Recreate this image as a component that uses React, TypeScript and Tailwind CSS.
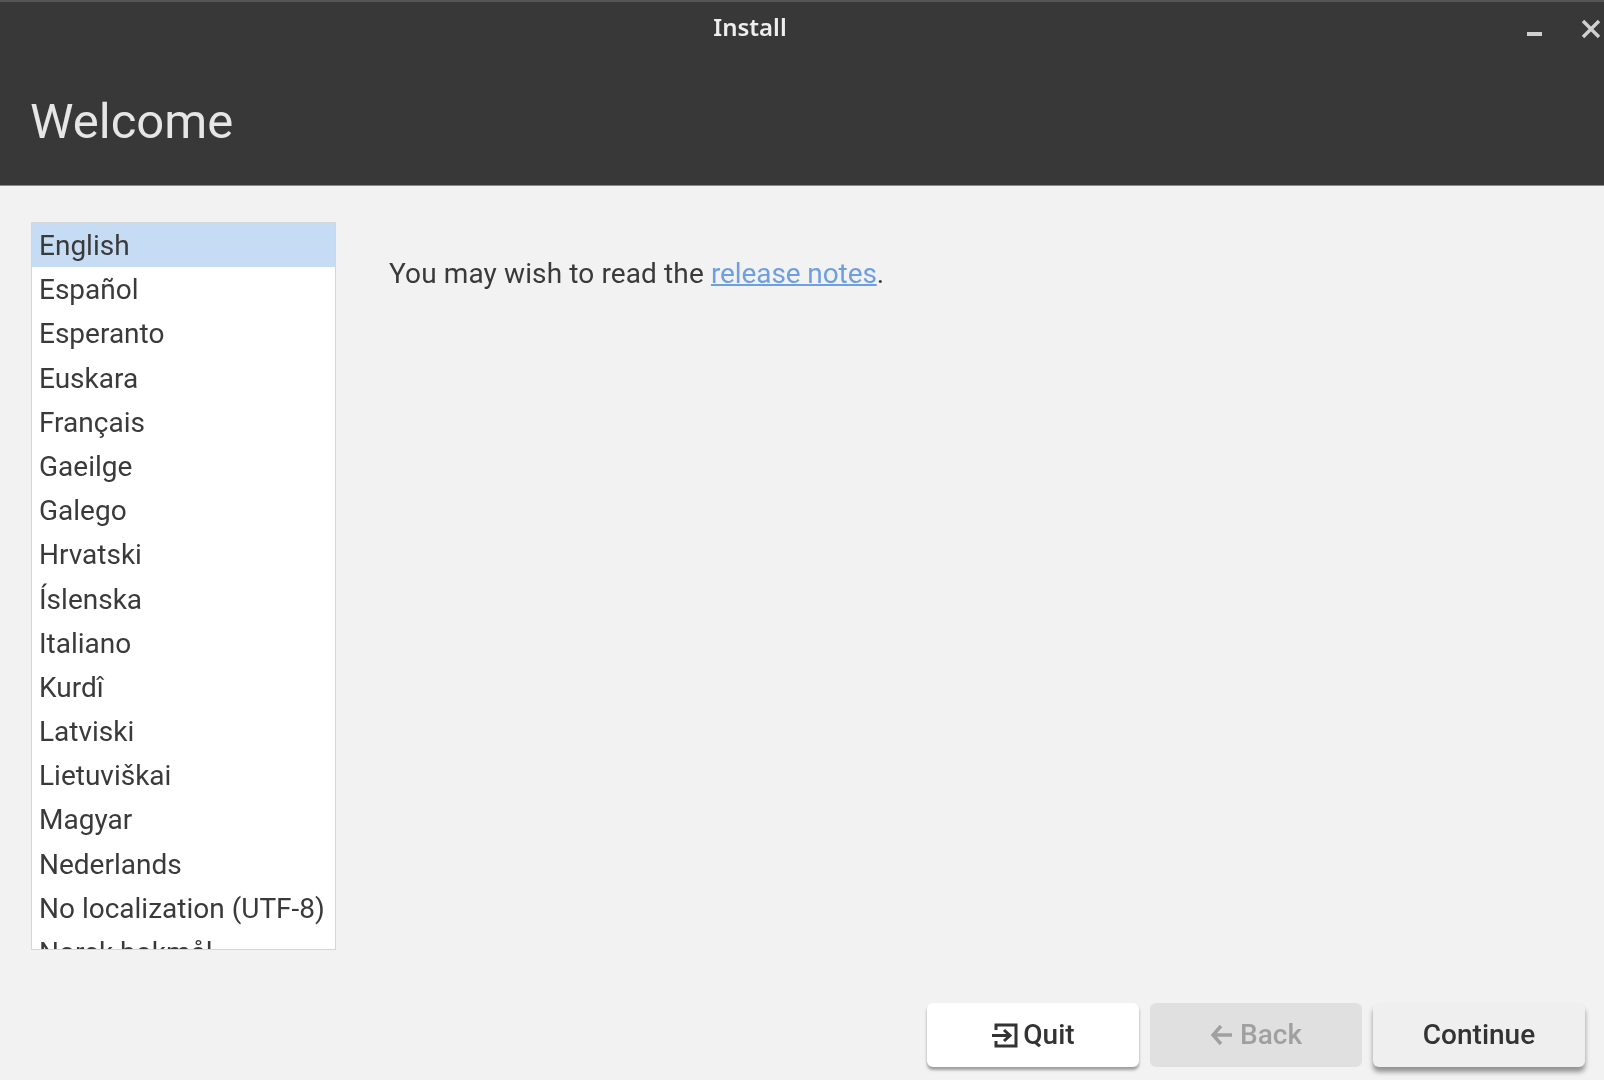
// App.tsx
const languages = [
  'English', 'Español', 'Esperanto', 'Euskara', 'Français', 'Gaeilge', 'Galego', 'Hrvatski', 'Íslenska',
  'Italiano', 'Kurdî', 'Latviski', 'Lietuviškai', 'Magyar', 'Nederlands', 'No localization (UTF-8)', 'Norsk bokmål',
]

export default function App() {
  return (
    <div className="flex h-[1080px] w-[1604px] flex-col overflow-hidden bg-[#f2f2f2] font-['Roboto',sans-serif] text-[#3a3a3a] blur-[0.6px]">

      {/* Header */}
      <header className="relative h-[186px] shrink-0 border-b border-[#8a8a8a] border-t-2 border-t-[#555555] bg-[#383838]">
        <div className="flex h-[50px] items-center justify-center">
          <span className="ml-[-104px] font-['Noto_Sans',sans-serif] text-[24px] font-semibold text-[#eeeeee]">Install</span>
        </div>
        <svg className="absolute right-[60px] top-[29px]" width="18" height="7" viewBox="0 0 18 7">
          <rect x="1" y="1" width="15" height="4" fill="#d0d0d0" />
        </svg>
        <svg className="absolute right-[3px] top-[17px]" width="20" height="20" viewBox="0 0 20 20">
          <path d="M2 2 L18 18 M18 2 L2 18" stroke="#d0d0d0" strokeWidth="3.4" fill="none" />
        </svg>
        <h1 className="ml-[30px] mt-[40px] text-[49px] font-normal leading-[60px] text-[#e6e6e6]">Welcome</h1>
      </header>

      {/* Content */}
      <main className="flex min-h-0 flex-1 flex-col">
        <div className="flex pl-[31px] pt-[36px]">
          <ul className="h-[728px] w-[305px] shrink-0 overflow-hidden border border-[#d6d6d6] bg-white text-[28px]">
            {languages.map((name, i) => (
              <li key={name} className={`h-[44.2px] pl-[7px] leading-[46px] ${i === 0 ? 'bg-[#c6dbf4]' : ''}`}>{name}</li>
            ))}
          </ul>
          <p className="ml-[53px] mt-[30px] text-[28px] leading-[44px] tracking-[0.12px]">
            You may wish to read the <a className="text-[#6e9fe0] underline decoration-2 tracking-[-0.1px]">release notes</a>.
          </p>
        </div>

        {/* Footer buttons */}
        <div className="mt-[53px] flex justify-end gap-[11px] pr-[19px] text-[28px] font-medium">
          <button className="flex h-[64px] w-[212px] items-center justify-center gap-[4px] rounded-[6px] bg-white text-[#333333] shadow-[0_3px_3px_rgba(0,0,0,0.35)]">
            <svg width="28" height="28" viewBox="0 0 28 28" fill="none" stroke="#333333" strokeWidth="3">
              <path d="M5 9 V4 H25 V25 H5 V20" />
              <path d="M1 14.5 H18 M13 9 L19 14.5 L13 20" />
            </svg>
            Quit
          </button>
          <button className="flex h-[64px] w-[212px] items-center justify-center gap-[6px] rounded-[6px] bg-[#e0e0e0] text-[#a0a0a0]">
            <svg width="24" height="24" viewBox="0 0 24 24" fill="none" stroke="#a0a0a0" strokeWidth="3.4">
              <path d="M22 12 H3 M11 3 L3 12 L11 21" />
            </svg>
            Back
          </button>
          <button className="h-[64px] w-[212px] rounded-[6px] bg-[#efefef] text-[#333333] shadow-[0_5px_5px_rgba(0,0,0,0.4)]">Continue</button>
        </div>
      </main>
    </div>
  )
}
